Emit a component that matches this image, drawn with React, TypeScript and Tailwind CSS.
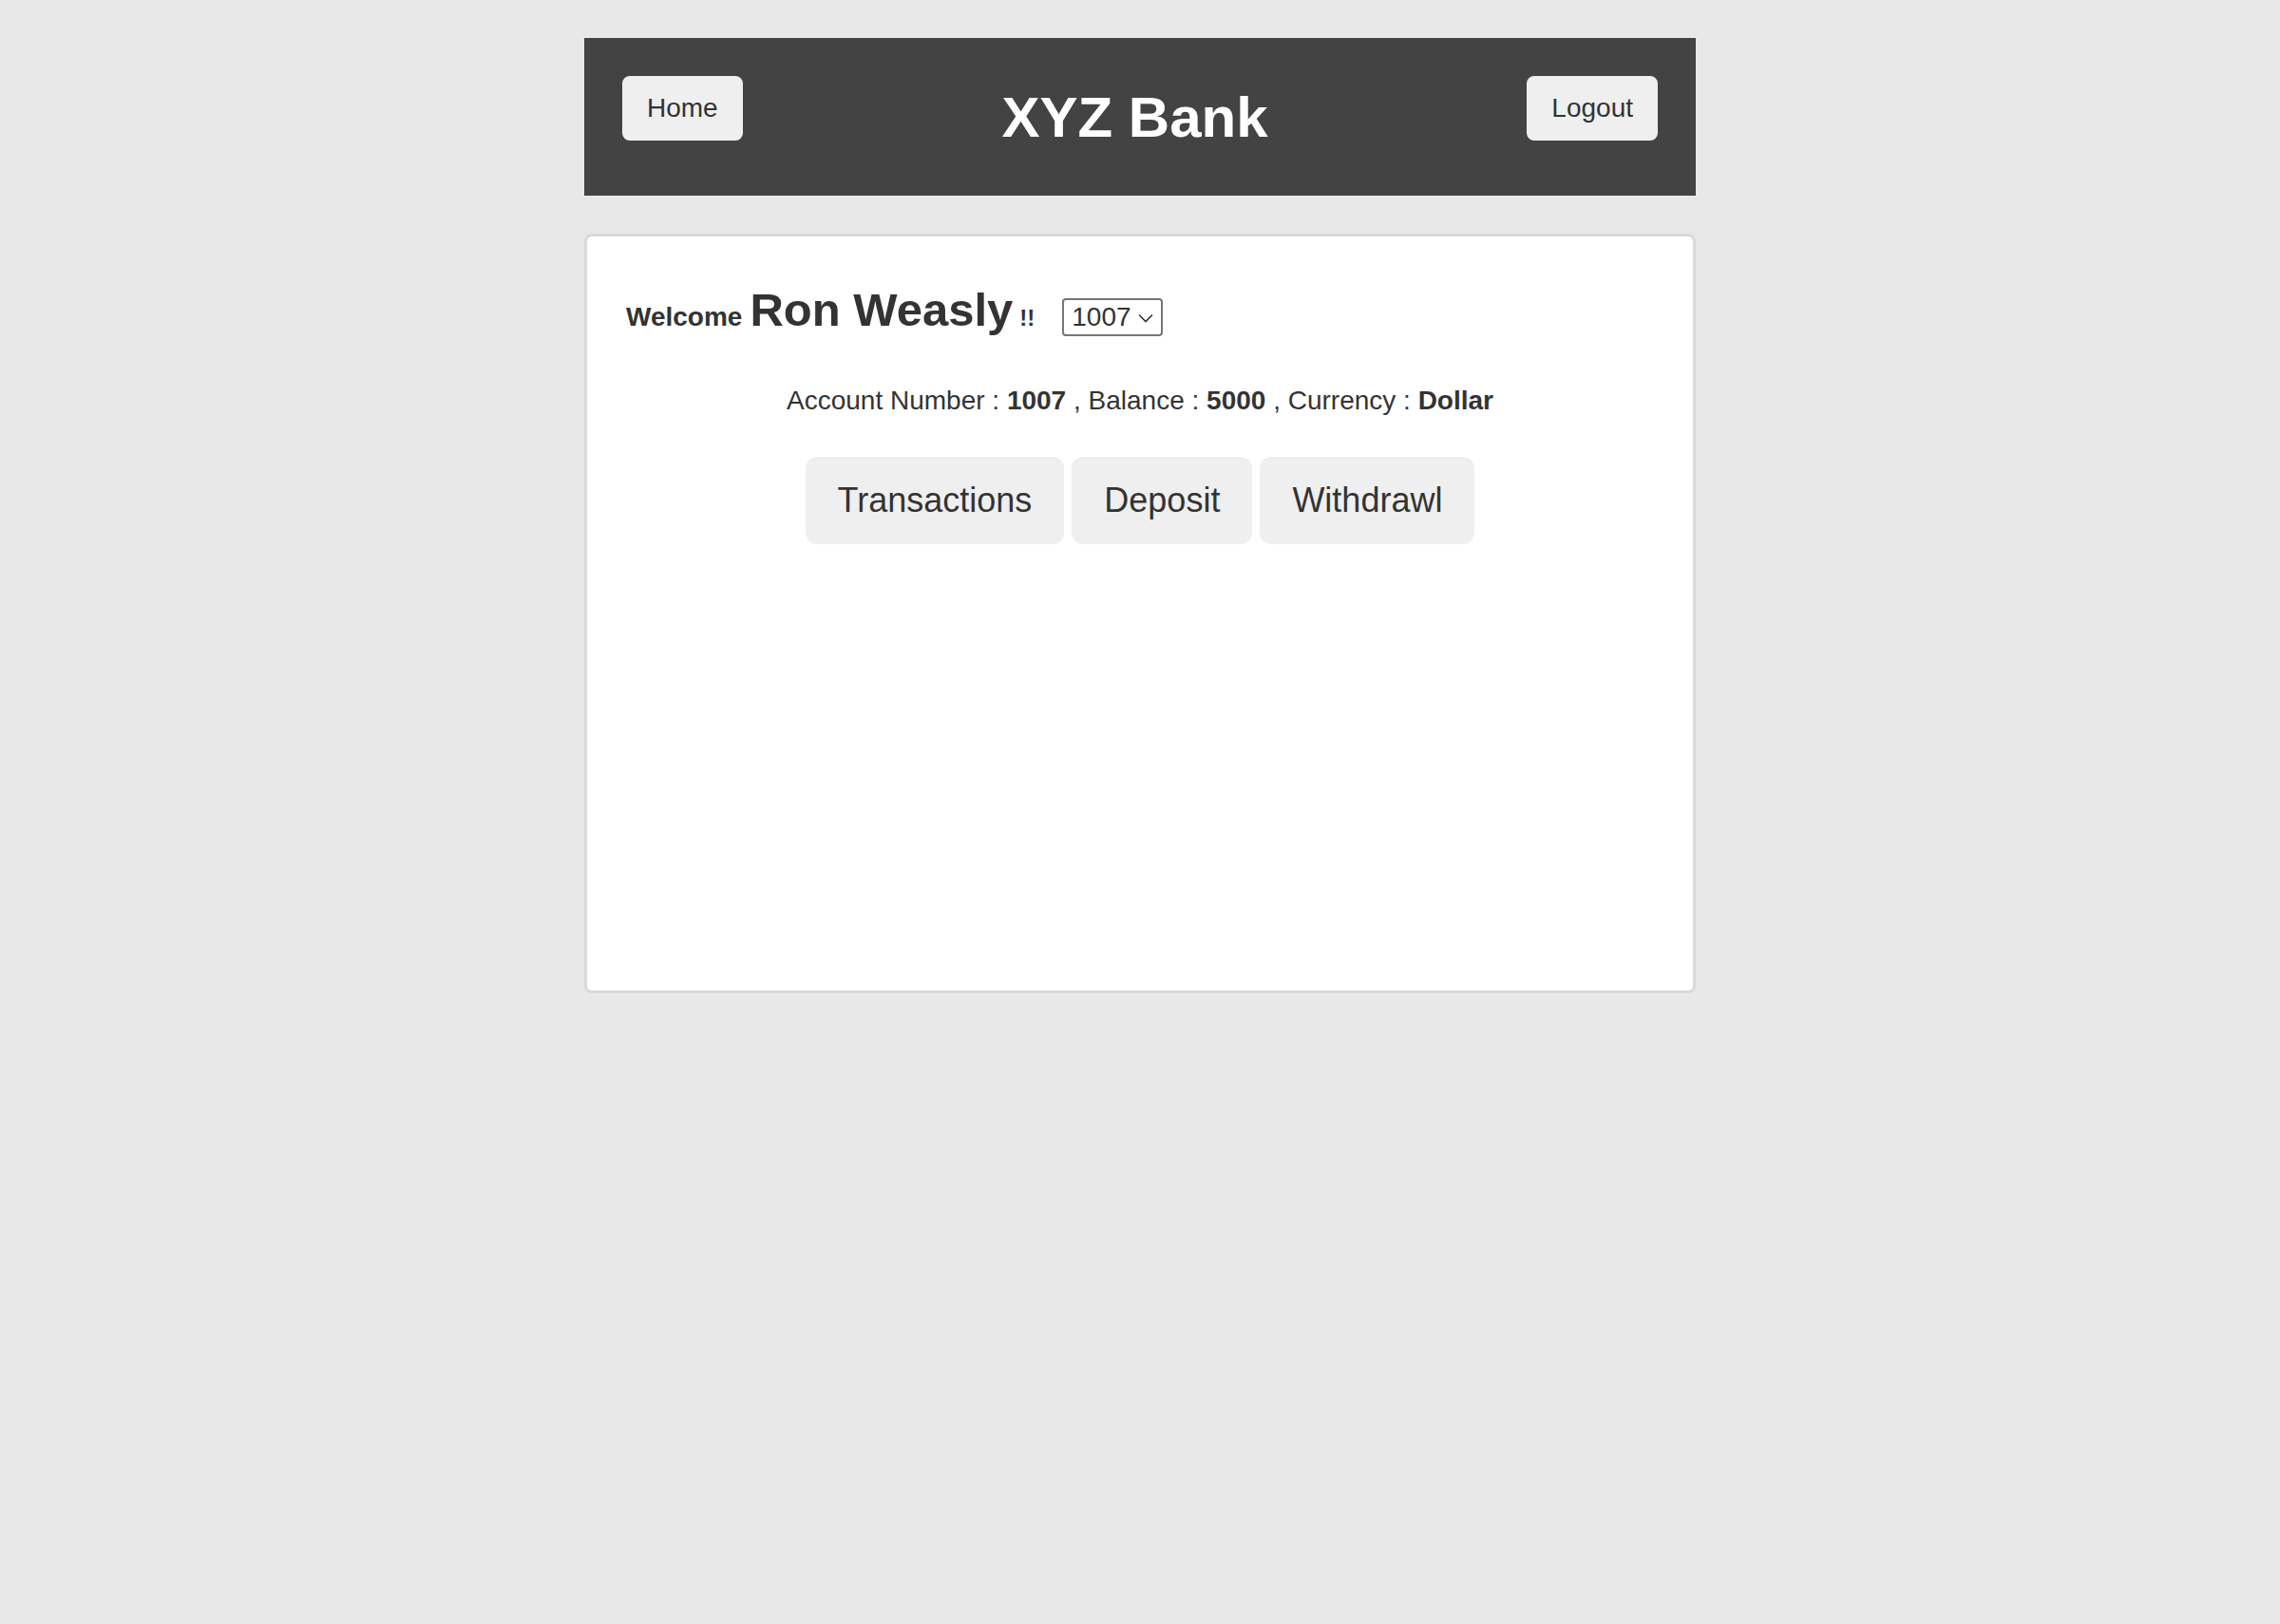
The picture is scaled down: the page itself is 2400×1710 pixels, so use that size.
import React from "react";

export default function App() {
  const font = { fontFamily: '"Liberation Sans", Arial, Helvetica, sans-serif' };
  return (
    <div className="min-h-[1710px] w-full bg-[#e8e8e8] pt-[40px] text-[#333333]" style={font}>
      <div className="mx-auto w-[1170px]">
        <header className="flex h-[166px] items-start justify-between bg-[#434343] px-[40px] pt-[40px]">
          <button className="h-[68px] rounded-[8px] border-2 border-[#efefef] bg-[#efefef] px-[24px] py-[12px] text-[28px] leading-[40px] text-[#333333]">
            Home
          </button>
          <strong className="mt-[14px] text-[60px] font-bold leading-none text-white">XYZ Bank</strong>
          <button className="h-[68px] rounded-[8px] border-2 border-[#efefef] bg-[#efefef] px-[24px] py-[12px] text-[28px] leading-[40px] text-[#333333]">
            Logout
          </button>
        </header>

        <main className="mt-[40px] h-[800px] rounded-[8px] border-[3px] border-[#d9d9d9] bg-white px-[41px] pt-[53px]">
          <div className="flex items-baseline">
            <strong className="text-[28px] font-bold leading-[40px]">Welcome</strong>
            <span className="ml-[8px] text-[49px] font-bold leading-[48px]">Ron Weasly</span>
            <strong className="ml-[7px] text-[24px] font-bold leading-[40px]">!!</strong>
            <div className="relative ml-[29px] flex h-[40px] w-[106px] items-center rounded-[4px] border-2 border-[#767676] bg-white pl-[8px] text-[28px] leading-[32px]">
              <span>1007</span>
              <svg
                className="absolute right-[8px] top-[14px]"
                width="16"
                height="10"
                viewBox="0 0 16 10"
                fill="none"
              >
                <path d="M1 1.5 L8 8.5 L15 1.5" stroke="#333" strokeWidth="1.6" />
              </svg>
            </div>
          </div>

          <div className="mt-[47px] text-center text-[28px] leading-[40px]">
            Account Number : <strong className="font-bold">1007</strong> , Balance :{" "}
            <strong className="font-bold">5000</strong> , Currency : <strong className="font-bold">Dollar</strong>
          </div>

          <div className="mt-[39px] flex justify-center gap-[8px]">
            {["Transactions", "Deposit", "Withdrawl"].map((t) => (
              <button
                key={t}
                className="rounded-[12px] border-2 border-[#efefef] bg-[#efefef] px-[32px] py-[20px] text-[36px] leading-[48px] text-[#333333]"
              >
                {t}
              </button>
            ))}
          </div>
        </main>
      </div>
    </div>
  );
}
